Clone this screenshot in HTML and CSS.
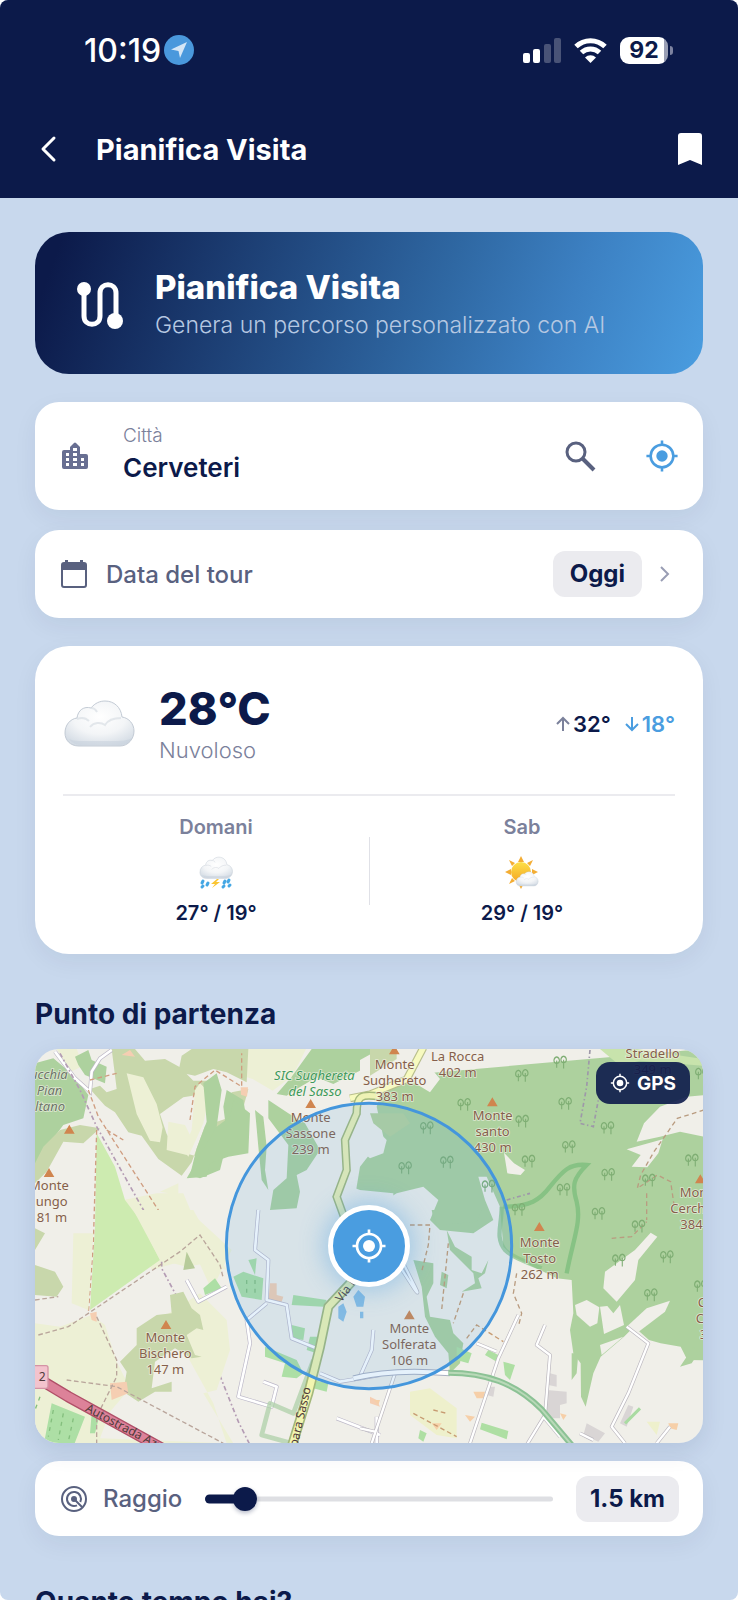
FILE: index.html
```html
<!DOCTYPE html>
<html lang="it">
<head>
  <meta charset="UTF-8" />
  <meta name="viewport" content="width=device-width, initial-scale=1.0" />
  <title>Pianifica Visita</title>
  <link rel="stylesheet" href="styles.css">
</head>
<body>
  <!-- Shared icons -->
  <svg class="sprite" aria-hidden="true">
    <symbol id="i-gps" viewBox="0 0 24 24">
      <circle cx="12" cy="12" r="4" fill="currentColor"/>
      <circle cx="12" cy="12" r="8" fill="none" stroke="currentColor" stroke-width="1.8"/>
      <path d="M12 1v3M12 20v3M1 12h3M20 12h3" stroke="currentColor" stroke-width="1.8"/>
    </symbol>
    <symbol id="i-cloud" viewBox="0 0 72 50">
      <path d="M16 47C7 47 2 41 2 34c0-8 5-14 12-15C15 11 21 7 28 9 32 4 37 2 42 2c9 0 16 6 17 16 7 1 12 7 12 14 0 8-6 15-14 15z" fill="url(#cloudFill)" stroke="#c3cbd5" stroke-width="1"/>
      <path d="M28 9c3 0 5 2 6 4M14 20c5-2 9-1 12 2M27 28c4-5 11-5 15-2 3-5 10-7 16-7" fill="none" stroke="#d9dee4" stroke-width="2" opacity=".7"/>
      <path d="M6 40c4 5 9 6 14 6h36c6 0 10-2 13-7-5 3-12 3-18 3H20c-6 0-10 0-14-2z" fill="#c6d0db" opacity=".5"/>
    </symbol>
    <symbol id="tree" viewBox="0 0 42 38">
      <path d="M11 4c-10 3-10 18 0 18s10-15 0-18zM11 14v20M30 2c-10 3-10 18 0 18s10-15 0-18zM30 12v24" fill="none" stroke="#7fae74" stroke-width="3"/>
    </symbol>
    <defs>
      <radialGradient id="cloudFill" cx=".5" cy=".35" r=".7">
        <stop offset="0" stop-color="#ffffff"/>
        <stop offset=".55" stop-color="#f3f5f7"/>
        <stop offset="1" stop-color="#d3dbe4"/>
      </radialGradient>
      <linearGradient id="sunFill" x1="0" y1="0" x2="0" y2="1">
        <stop offset="0" stop-color="#fde047"/>
        <stop offset="1" stop-color="#f5a623"/>
      </linearGradient>
    </defs>
  </svg>

  <div class="app">
    <header class="header">
      <div class="status">
        <div class="status-time">
          <span>10:19</span>
          <svg width="32" height="32" viewBox="0 0 32 32"><circle cx="16" cy="16" r="15" fill="#4a98dc"/><path d="M24 8 8 15.500l7.500 1.500L17 24z" fill="#d5e6f6"/></svg>
        </div>
        <div class="status-icons">
          <svg width="38" height="25" viewBox="0 0 38 25" fill="#fff">
            <rect x="0" y="15" width="7" height="10" rx="2"/>
            <rect x="10" y="11" width="7" height="14" rx="2"/>
            <rect x="21" y="6" width="7" height="19" rx="2" opacity=".25"/>
            <rect x="31" y="0" width="7" height="25" rx="2" opacity=".25"/>
          </svg>
          <svg width="33" height="25" viewBox="0 0 33 25" fill="none" stroke="#fff" stroke-width="5">
            <path d="M2 8.500a21 21 0 0 1 29 0"/>
            <path d="M7.500 14.500a13 13 0 0 1 18 0"/>
            <path d="M16.500 25l-5.500-5.500a8 8 0 0 1 11 0z" fill="#fff" stroke="none"/>
          </svg>
          <div class="battery">92</div>
        </div>
      </div>
      <div class="nav">
        <button class="icon-btn" aria-label="Indietro">
          <svg width="24" height="28" viewBox="0 0 24 28" fill="none" stroke="currentColor" stroke-width="3" stroke-linecap="round" stroke-linejoin="round"><path d="M19 3 8 14l11 11"/></svg>
        </button>
        <h1>Pianifica Visita</h1>
        <button class="icon-btn" aria-label="Salva">
          <svg width="26" height="32" viewBox="0 0 26 32" fill="currentColor"><path d="M4 0h18q3 0 3 3v29l-12-5-12 5V3q0-3 3-3z"/></svg>
        </button>
      </div>
    </header>

    <main class="content">
      <section class="hero">
        <svg width="48" height="48" viewBox="0 0 48 48" fill="none" stroke="#fff" stroke-width="5">
          <path d="M8 8v27c0 11 16 11 16 0V12c0-11 16-11 16 0v27"/>
          <circle cx="8" cy="8" r="7" fill="#fff" stroke="none"/>
          <circle cx="39" cy="40" r="8" fill="#fff" stroke="none"/>
        </svg>
        <div>
          <h2>Pianifica Visita</h2>
          <p>Genera un percorso personalizzato con AI</p>
        </div>
      </section>

      <section class="card city">
        <svg width="28" height="28" viewBox="0 0 28 28" fill="#686f92" fill-rule="evenodd"><path d="M3 8h6V5l4-4q1-1 2 0l4 4v7h6q2 0 2 2v11q0 2-2 2H3q-2 0-2-2V10q0-2 2-2zM5 11v3h3v-3zM5 16v3h3v-3zM5 21v3h3v-3zM12 6v3h4V6zM12 11v3h4v-3zM12 16v3h4v-3zM12 21v3h4v-3zM20 16v3h3v-3zM20 21v3h3v-3z"/></svg>
        <div class="field">
          <label for="city">Città</label>
          <input id="city" type="text" value="Cerveteri">
        </div>
        <button class="icon-btn muted" aria-label="Cerca">
          <svg width="32" height="32" viewBox="0 0 32 32" fill="none" stroke="currentColor" stroke-width="3"><circle cx="12" cy="12" r="9"/><path d="M18 18l12 12" stroke-width="4"/></svg>
        </button>
        <button class="icon-btn accent" aria-label="Usa posizione">
          <svg width="34" height="34"><use href="#i-gps"/></svg>
        </button>
      </section>

      <section class="card date">
        <svg width="26" height="30" viewBox="0 0 26 30"><path d="M3 4h20q2 0 2 2v20q0 2-2 2H3q-2 0-2-2V6q0-2 2-2z" fill="none" stroke="#59617f" stroke-width="2"/><path d="M1 4h24v7H1zM4 1h3v4H4zM19 1h3v4h-3z" fill="#59617f"/></svg>
        <span class="row-label">Data del tour</span>
        <button class="pill">Oggi</button>
        <svg width="12" height="18" viewBox="0 0 12 18" fill="none" stroke="#999db4" stroke-width="2"><path d="M2 2l7 7-7 7"/></svg>
      </section>

      <section class="card weather">
        <div class="today">
          <svg width="72" height="50"><use href="#i-cloud"/></svg>
          <div class="now">
            <strong>28°C</strong>
            <span>Nuvoloso</span>
          </div>
          <div class="range-temp">
            <span><svg width="14" height="16" viewBox="0 0 14 16" fill="none" stroke="#7b819b" stroke-width="2"><path d="M7 15V2M1 8l6-6 6 6"/></svg>32°</span>
            <span class="low"><svg width="14" height="16" viewBox="0 0 14 16" fill="none" stroke="currentColor" stroke-width="2"><path d="M7 1v13M1 8l6 6 6-6"/></svg>18°</span>
          </div>
        </div>
        <div class="forecast">
          <div class="day">
            <span class="day-name">Domani</span>
            <svg width="36" height="36" viewBox="0 0 36 36">
              <use href="#i-cloud" x="1" y="1" width="34" height="24"/>
              <path d="M19 24l-6 5h4l-3 4 8-6h-4l3-3z" fill="#fbc531"/>
              <path d="M5 26l-1 2M10 28l-1 2M27 26l-1 2M31 25l-1 2M26 31l-1 1M5 31l-1 1M32 30l-1 1" stroke="#45a7e4" stroke-width="3" stroke-linecap="round"/>
            </svg>
            <span class="day-temp">27° / 19°</span>
          </div>
          <div class="day">
            <span class="day-name">Sab</span>
            <svg width="36" height="36" viewBox="0 0 36 36">
              <path d="M17 1l3 6h-6zM17 34l3-6h-6zM1 17l6-3v6zM34 17l-6-3v6zM5 5l6 3-3 3zM29 5l-6 3 3 3zM5 29l6-3-3-3z" fill="#f4ad33"/>
              <circle cx="17" cy="17" r="10" fill="url(#sunFill)"/>
              <use href="#i-cloud" x="11" y="16" width="24" height="16"/>
            </svg>
            <span class="day-temp">29° / 19°</span>
          </div>
        </div>
      </section>

      <h3>Punto di partenza</h3>
      <section class="map">
        <svg class="map-art" viewBox="0 0 2004 1182" preserveAspectRatio="xMidYMid slice">
          <rect width="2004" height="1182" fill="#f0efe9"/>

          <!-- North west -->
          <g transform="translate(-105 -207)">
            <path d="M728 207h190l-40 80-60 45-60-35-32-10zM170 207h60l20 50-40 20z" fill="#edf0d5"/>
            <path d="M105 250l55-15 60 50 45 60-15 70-60 20-60 80-25 60z" fill="#add19e"/>
            <path d="M225 230l40-20 10 30 45 20-5 50-60-25-20-30z" fill="#add19e"/>
            <path d="M130 500l50-50 60-15 60 10-50 45-60-5-50 90-35 35v-60z" fill="#c8d7ab"/>
            <path d="M335 207h70l30 35 60-5 45 25 40 40 50 0-20 40-60 10-70 50 20 60 30 50 70 20 60 0 15-60 40-35 30-110-50 10-20 80-60 20-40 110-30 40-70-50-50-70-40-10-40-60-30-20-45-50 30-10 20 20 30-10z" fill="#c8d7ab"/>
            <path d="M575 207h170l-5 100-60-30-40-10-55 20-50-10 10-50z" fill="#c8d7ab"/>
            <path d="M380 280l50 12 40 80 18 70-8 45-30-5-40-80zM505 425l50 10 25 50-20 40-60-15zM600 310l30 30-20 90-45 100-15-20 25-60 10-120z" fill="#edf0d5"/>
            <path d="M610 310l40-30 15 50-15 110 30 20-10-80 10-50 50 30 10 60-35 20-30 70-15 60-60 25-30-10 20-80 30-80z" fill="#add19e"/>
            <path d="M650 440l40-30 10-50 50 40-5 120-60 10-55 20-10 40-60 5z" fill="#add19e"/>
            <path d="M875 290l60-83h205v35l-80 40-60 30-50-20-60 35-30 20-30-5zM765 390l25 20 10 90-5 70 10 60-20-30-10-100zM805 360l60 40 50 30 45 80-40 60-30 15 10 50-10 50-80 5 10-60 40-35 5-100-60-80z" fill="#add19e"/>
            <path d="M1080 207h60v150l-60-20z" fill="#add19e"/>
            <path d="M480 635l55-25v35zM370 660l100-20 80 0 25 60 120 110-60 120-50-110-60 30-70 20z" fill="#edf0d5"/>
            <path d="M290 460l55 100 30 100 45 60 60 120-210 150 15-250z" fill="#cdebb0"/>
            <path d="M365 225l25-15 15 20zM722 322h22l-3 28-18-6z" fill="#f5ceb2"/>
            <path d="M165 215l60 80 45 40 5-60 25-40 35-25" fill="none" stroke="#bdb8c6" stroke-width="12"/>
            <path d="M165 215l60 80 45 40 5-60 25-40 35-25" fill="none" stroke="#fff" stroke-width="8"/>
            <path d="M180 220l60 110 50 110 160 285 35 90 0 50 70 130 100 180 60 150 40 80" fill="none" stroke="#b49cb4" stroke-width="5" stroke-dasharray="14 8 5 8"/>
            <path d="M270 300l80-20M265 330l30 80 180 280 60 140M320 450l50 30M570 420l15-100 60-50 80 50 0-100M290 450l-10 340-15 210" fill="none" stroke="#cf9d80" stroke-width="4" stroke-dasharray="14 9"/>
          </g>

          <!-- South west -->
          <g transform="translate(-105 483)">
            <path d="M105 340l75 10 95-35 40 30 35 110 40 80-60 70-30 80 380 15-40-120-110-200-70-40 140-90 80 80 10 90-40 120-40 10 90 150-60 40H105zM220 70h60l-15 230-50-20z" fill="#edf0d5"/>
            <path d="M400 0h180l50 90 50 90-60-20-60 10-80-20z" fill="#edf0d5"/>
            <path d="M105 165l60 20 25 45-20 30-65-5zM105 55l30 15-30 50zM510 255l40-10 25 50 25 20 10 45-20-5-30 20 25 60 20 5-30 5-50-30-60 40-10 80 60-20 0 30-50 0-50 30-45-30 10-60-20-30 50-50 0-50 60-40 45-5z" fill="#c8d7ab"/>
            <path d="M560 125l25 50-35 5z" fill="#b7cb9a"/>
            <path d="M155 580l100 40-35 90H130zM275 610l20 20-10 40h-15zM610 235l35-30 20 30-50 20zM700 200l30-15 60 20-5 65-60-10zM745 150l25-5-5 50zM880 255l100 15-10 20-95-5zM875 345l40 10-5 35-35-5zM930 380l30 0-10 50-30-10zM795 410l95 40 20 40-20 15-45-5 10-40-60-20zM940 510l45 10-5 25-40-10z" fill="#addfa5"/>
            <path d="M120 560l-15 40M160 600l-15 80M190 610l-15 80M220 625l-15 70M740 210v40M765 210v50" stroke="#84bf7e" stroke-width="4" stroke-dasharray="12 14"/>
            <path d="M330 520l50-5 5 35-50 20zM270 310l20-5 0 30-15-5zM810 220l20 0 0 35 20 5-5 15-40 0zM1110 560l20 10 10 20-30-10z" fill="#f5ceb2"/>
            <path d="M115 375l90-25 60-40 275-185 60-50 60 90 10 40M290 320l60 130 0 50-60 120 0 80M200 510l150 20 320 170M105 270l70-10" fill="none" stroke="#b9a59b" stroke-width="4" stroke-dasharray="14 8"/>
            <g fill="none" stroke-linejoin="round">
              <path d="M560 210l35 65 85-45M775 0l-10 120 40 30-5 120 60 15 15 100 75 30M800 280l-60 50 10 70-35 160 100 30 15-60-40-15M1010 625l130 50M1120 360l-5 60-40 90M960 490l60 25 120-20M1130 620v80" stroke="#bcb8c8" stroke-width="12"/>
              <path d="M560 210l35 65 85-45M775 0l-10 120 40 30-5 120 60 15 15 100 75 30M800 280l-60 50 10 70-35 160 100 30 15-60-40-15M1010 625l130 50M1120 360l-5 60-40 90M960 490l60 25 120-20M1130 620v80" stroke="#fff" stroke-width="8"/>
              <path d="M940 450l-60 160-70-30-25 95 90 25" stroke="#a9cfa4" stroke-width="14" opacity=".7"/>
              <path d="M1060 210l-75 80-25 120-35 140-50 160" stroke="#a4b87b" stroke-width="30"/>
              <path d="M1060 210l-75 80-25 120-35 140-50 160" stroke="#f2f5b0" stroke-width="20"/>
              <path d="M105 500l100 60 100 55 190 105" stroke="#b04f68" stroke-width="34"/>
              <path d="M105 500l100 60 100 55 190 105" stroke="#dc8299" stroke-width="26"/>
            </g>
            <path d="M1015 290l15-10 10 25-10 30-15-10zM1060 260l15-20 20 20-5 30-20 0zM1080 305h10v20h-10z" fill="#8cbfe4"/>
            <rect x="90" y="467" width="54" height="68" rx="6" fill="#f3c3cd" stroke="#d493a5" stroke-width="4"/>
            <text x="116" y="514" class="road">2</text>
            <text x="0" y="0" transform="translate(254 602) rotate(28)" class="road">Autostrada Azz</text>
            <text x="0" y="0" transform="translate(892 712) rotate(-77)" class="road">para Sasso</text>
            <text x="0" y="0" transform="translate(1024 278) rotate(-53)" class="road">Via F</text>
          </g>

          <!-- East -->
          <g transform="translate(975 -207)">
            <path d="M1032 207v934l-50-1-20-40-60-10-35-10-45-40-30 30-70 60-22 50-23 100-14-30-1-100-22-30-10-70 10-50-5-100-45-5-70-35-60-30-30-30-10-120-40-90-25 0 20 70 25 60-60 40-100-10-30-30 25-60-45-40-80 20-65 40-30-10-30-20 15-90 70-90-20-90 30-90z" fill="#add19e"/>
            <path d="M0 240l60-33h90l40 30 50 60-30 40-50-30-90 20-70 30zM-80 600l80 30 100 10 0 60-80 60-100-20z" fill="#f0efe9"/>
            <path d="M-20 460l40-30 40 30 20 20-10 40-40 15-50-40z" fill="#f0efe9"/>
            <path d="M30 400l100 0 20 30-60 40-50-40z" fill="#b6d29c"/>
            <path d="M30 207h80v30l-80 50z" fill="#c8d7ab"/>
            <path d="M720 207h110l200 30v20l-190-15-60 15z" fill="#c8e3ac"/>
            <path d="M430 680c80 0 110-20 140-60 40-50 60-70 110-65-40 40-45 60-30 110 15 60-10 110-30 215" fill="none" stroke="#87c284" stroke-width="13"/>
            <path d="M425 680c0 60-20 90 10 130 20 20 60 35 110 55" fill="none" stroke="#87c284" stroke-width="13" opacity=".7"/>
            <path d="M690 210l-10 110-20 110 40 10 15-80M440 660l70-20" fill="none" stroke="#9e98a9" stroke-width="5" stroke-dasharray="12 8 4 8"/>
            <path d="M-30 355l60-12 110-45 50-95" fill="none" stroke="#b9bf8d" stroke-width="24"/>
            <path d="M-30 355l60-12 110-45 50-95" fill="none" stroke="#f7fabf" stroke-width="17"/>
            <path d="M60 350c-60-10-70 0-70 50l-35 80 5 90-30 80 40 110" fill="none" stroke="#a4b87b" stroke-width="25"/>
            <path d="M60 350c-60-10-70 0-70 50l-35 80 5 90-30 80 40 110" fill="none" stroke="#eef2b4" stroke-width="16"/>
          </g>
          <g transform="translate(975 483)">
            <path d="M635 430l20 0-5 60-15 20zM960 470l40-60 15 20-20 30zM160 150l60 10 0 60-20 40 10 60 60 10 10 40 30 30-10 60-30 30-5-60-40-50-30-60-10-90zM215 0h150l-15 35-110 10-20-20zM245 185l20 10-5 40-20-10zM260 60l25 50 50 30 0 40 30 10 20-40-10 40-20 15 10 30-60 10 40-25-5-30-70-70z" fill="#add19e"/>
            <path d="M290 410l45 20-10 30-35-10zM385 420l30 15-5 20-35-20zM430 455l35 10-15 45-15-15zM365 638l80 25-5 25-80-30zM180 660l20 10-10 25-15-10z" fill="#aedfa3"/>
            <path d="M150 545l60-10 80 60 0 90-60-10-80-60zM860 635l40 0-10 40z" fill="#eef0cc"/>
            <path d="M570 490l20 5 0 35-25-5zM560 540l60 5 0 35-20 5 0 40-45 0zM805 585l15 5-20 60-20-10zM680 640l55 30-20 25-45-20zM385 530l20 0-5 30-20-5z" fill="#d9d5d5"/>
            <path d="M340 545l35 0-5 20-20 0zM315 615l30 5-15 15zM600 610l20 5-10 15zM925 640l30 0-5 20-20-5zM215 640l30 0-15 20zM40 570l20 0-5 15z" fill="#f6cfa8"/>
            <path d="M160 610l130 70M220 600l40 10M320 385l30-40 80 50M150 45h60l-5 60-20 80M265 100l-20 200M310 250l-30 90" fill="none" stroke="#c79b72" stroke-width="4" stroke-dasharray="14 9"/>
          </g>

          <!-- Clearings in the woods -->
          <g transform="translate(975 -207)" fill="#f0efe9">
            <polygon points="1040,345 980,350 900,380 852,430 830,485 900,470 960,455 1040,472"/>
            <polygon points="800,508 908,478 895,520 862,562 815,560 842,525"/>
            <polygon points="432,518 462,550 495,570 482,585 442,580"/>
            <polygon points="735,875 825,810 872,758 892,770 835,840 825,900 770,965 730,925"/>
            <polygon points="645,975 680,960 718,982 712,1030 690,1040 650,1005"/>
            <polygon points="720,980 742,978 760,1000 780,975 792,1035 732,1062"/>
            <polygon points="800,1040 860,985 930,962 915,995 830,1060"/>
            <polygon points="720,1095 790,1070 725,1125"/>
          </g>
          <path transform="translate(975 -207)" d="M1032 390l-80 25-70 100-40 70-10 40 60-40 40 20 10 70M860 640v80M470 880l-10 60 25 60-10 40M755 775l60-5 45-45" fill="none" stroke="#b99c80" stroke-width="4" stroke-dasharray="14 10"/>
          <g transform="translate(975 483)" fill="none" stroke-linejoin="round">
            <path d="M475 315l-60 130-85 255M105 490L35 700M555 345l-25 60 40 30-15 180-55 90M550 620l50 60M800 350l65 50-60 150-50 100 40 50M930 650l-40 50M350 400l60 25M0 655l45 10M120 170l45 70q15 20 0-10l-40-80M660 670l40 20" stroke="#bcb8bf" stroke-width="11"/>
            <path d="M475 315l-60 130-85 255M105 490L35 700M555 345l-25 60 40 30-15 180-55 90M550 620l50 60M800 350l65 50-60 150-50 100 40 50M930 650l-40 50M350 400l60 25M0 655l45 10M120 170l45 70q15 20 0-10l-40-80M660 670l40 20" stroke="#fff" stroke-width="7"/>
            <path d="M-20 505q120-30 290-15" stroke="#aab0c2" stroke-width="18"/>
            <path d="M-20 505q120-30 290-15" stroke="#fff" stroke-width="12"/>
            <path d="M265 488c110 0 200 30 280 110l90 107" stroke="#8cc295" stroke-width="18"/>
            <path d="M265 488c110 0 200 30 280 110l90 107" stroke="#b9d9b8" stroke-width="6"/>
            <path d="M840 595l-45 45" stroke="#a9dba2" stroke-width="9"/>
          </g>

          <g transform="translate(975 -207)">
            <use href="#tree" x="578" y="226" width="46" height="42"/>
            <use href="#tree" x="463" y="266" width="46" height="42"/>
            <use href="#tree" x="290" y="353" width="46" height="42"/>
            <use href="#tree" x="593" y="350" width="46" height="42"/>
            <use href="#tree" x="464" y="403" width="46" height="42"/>
            <use href="#tree" x="720" y="423" width="46" height="42"/>
            <use href="#tree" x="178" y="423" width="46" height="42"/>
            <use href="#tree" x="604" y="480" width="46" height="42"/>
            <use href="#tree" x="483" y="523" width="46" height="42"/>
            <use href="#tree" x="238" y="526" width="46" height="42"/>
            <use href="#tree" x="113" y="543" width="46" height="42"/>
            <use href="#tree" x="722" y="563" width="46" height="42"/>
            <use href="#tree" x="973" y="520" width="46" height="42"/>
            <use href="#tree" x="844" y="580" width="46" height="42"/>
            <use href="#tree" x="363" y="598" width="46" height="42"/>
            <use href="#tree" x="588" y="608" width="46" height="42"/>
            <use href="#tree" x="693" y="680" width="46" height="42"/>
            <use href="#tree" x="453" y="668" width="46" height="42"/>
            <use href="#tree" x="813" y="718" width="46" height="42"/>
            <use href="#tree" x="898" y="810" width="46" height="42"/>
            <use href="#tree" x="754" y="820" width="46" height="42"/>
            <use href="#tree" x="850" y="924" width="46" height="42"/>
            <use href="#tree" x="1000" y="898" width="46" height="42"/>
            <use href="#tree" x="1003" y="260" width="46" height="42"/>
          </g>

          <!-- Peaks and names -->
          <path class="peaks" d="M103 227l-16 27h32zM42 357l-16 27h32zM827 150l-16 27h32zM1078-11l-16 27h32zM1372 145l-16 27h32zM1513 519l-16 27h32zM1123 784l-16 27h32zM393 813l-16 27h32zM1996 376l-16 27h32z"/>
          <g class="labels">
            <text><tspan x="98" y="91" class="grey">ucchia</tspan><tspan x="82" y="138" class="grey">Pian</tspan><tspan x="90" y="186" class="grey">ltano</tspan></text>
            <text class="start"><tspan x="-18" y="424">Monte</tspan><tspan x="2" y="472">ungo</tspan><tspan x="5" y="520">81 m</tspan></text>
            <text class="park"><tspan x="838" y="93">SIC Sughereta</tspan><tspan x="840" y="140">del Sasso</tspan></text>
            <text><tspan x="827" y="220">Monte</tspan><tspan x="827" y="268">Sassone</tspan><tspan x="827" y="316">239 m</tspan></text>
            <text><tspan x="1079" y="59">Monte</tspan><tspan x="1079" y="107">Sughereto</tspan><tspan x="1079" y="155">383 m</tspan></text>
            <text><tspan x="1268" y="37">La Rocca</tspan><tspan x="1268" y="85">402 m</tspan></text>
            <text><tspan x="1373" y="213">Monte</tspan><tspan x="1373" y="261">santo</tspan><tspan x="1373" y="309">430 m</tspan></text>
            <text><tspan x="1853" y="27">Stradello</tspan><tspan x="1853" y="75">349 m</tspan></text>
            <text class="start"><tspan x="1934" y="443">Monte</tspan><tspan x="1906" y="491">Cerchio</tspan><tspan x="1936" y="539">384 m</tspan></text>
            <text><tspan x="1514" y="593">Monte</tspan><tspan x="1514" y="641">Tosto</tspan><tspan x="1514" y="689">262 m</tspan></text>
            <text><tspan x="1123" y="853">Monte</tspan><tspan x="1123" y="901">Solferata</tspan><tspan x="1123" y="949">106 m</tspan></text>
            <text><tspan x="391" y="878">Monte</tspan><tspan x="391" y="926">Bischero</tspan><tspan x="391" y="974">147 m</tspan></text>
            <text class="start"><tspan x="1988" y="775">C</tspan><tspan x="1982" y="823">C</tspan><tspan x="1994" y="871">3</tspan></text>
          </g>

          <!-- Search radius -->
          <circle cx="1002" cy="591" r="428" fill="#4a9de0" fill-opacity=".14" stroke="#4496dc" stroke-width="9"/>
        </svg>
        <div class="marker"><svg width="36" height="36"><use href="#i-gps"/></svg></div>
        <button class="gps"><svg width="20" height="20"><use href="#i-gps"/></svg>GPS</button>
      </section>

      <section class="card radius">
        <svg width="26" height="26" viewBox="0 0 26 26" fill="none" stroke="#59617f" stroke-width="2"><circle cx="13" cy="13" r="12"/><path d="M16 19.300a7 7 0 1 1 3.300-3.300M13 13l8 8"/><circle cx="13" cy="13" r="2" fill="#59617f"/></svg>
        <label class="row-label" for="radius">Raggio</label>
        <div class="slider">
          <input id="radius" type="range" min="0.5" max="10" step="0.5" value="1.5">
        </div>
        <output class="pill" for="radius">1.5 km</output>
      </section>

      <h3>Quanto tempo hai?</h3>
    </main>
  </div>
</body>
</html>
```
FILE: styles.css
```css
* {
  box-sizing: border-box;
}
body, html {
  margin: 0;
  padding: 0;
  height: 100%;
  background: #fff;
  color: #0c1a4a;
  font-family: Inter, "Open Sans", sans-serif;
}
h1, h2, h3, p {
  margin: 0;
}
svg {
  display: block;
  flex: none;
}
button, input {
  font-family: inherit;
  color: inherit;
}
.sprite {
  position: absolute;
  width: 0;
  height: 0;
}
.app {
  display: flex;
  flex-direction: column;
  height: 100vh;
  overflow: hidden;
  border-radius: 8px;
  background: #c8d8ed;
}

/* Header */
.header {
  flex: none;
  background: #0c1a4a;
  color: #fff;
}
.status {
  display: flex;
  align-items: center;
  justify-content: space-between;
  height: 100px;
  padding: 0 64px 0 84px;
}
.status-time {
  display: flex;
  align-items: center;
  gap: 2px;
  font-size: 32px;
  font-weight: 500;
}
.status-icons {
  display: flex;
  align-items: center;
  gap: 13px;
}
.battery {
  position: relative;
  width: 48px;
  height: 27px;
  margin-right: 6px;
  border-radius: 9px;
  background: linear-gradient(90deg, #fff 44px, #9a9fb5 44px);
  color: #0c1a4a;
  font-size: 23px;
  font-weight: 700;
  line-height: 27px;
  text-align: center;
}
.battery::after {
  content: "";
  position: absolute;
  top: 9px;
  right: -5px;
  width: 3px;
  height: 9px;
  border-radius: 0 4px 4px 0;
  background: #7d83a0;
}
.nav {
  display: flex;
  align-items: center;
  height: 98px;
  padding: 0 35px;
}
.nav h1 {
  flex: 1;
  padding-left: 37px;
  font-size: 29px;
  font-weight: 700;
}
.icon-btn {
  padding: 0;
  border: none;
  background: none;
  cursor: pointer;
}
.icon-btn.muted {
  margin-right: 49px;
  color: #59617f;
}
.icon-btn.accent {
  color: #4a9de0;
}

/* Content */
.content {
  flex: 1;
  min-height: 0;
  padding: 34px 35px;
  overflow-y: auto;
  scrollbar-width: none;
}
.hero {
  display: flex;
  align-items: center;
  gap: 31px;
  height: 142px;
  padding: 4px 41px 0;
  border-radius: 34px;
  background: linear-gradient(110deg, #0c1a4a 4%, #2f68a3 60%, #3c80c2 78%, #4a9de0);
  color: #fff;
}
.hero h2 {
  font-size: 33px;
  font-weight: 800;
  line-height: 40px;
}
.hero p {
  color: #b6c8e2;
  font-size: 23px;
  font-weight: 300;
  line-height: 36px;
}
.card {
  display: flex;
  align-items: center;
  padding: 0 26px;
  border-radius: 24px;
  background: #fff;
  box-shadow: 0 8px 24px rgba(12, 26, 74, 0.06);
}
.city {
  height: 108px;
  margin-top: 28px;
  padding-right: 24px;
}
.field {
  flex: 1;
  min-width: 0;
  padding: 0 20px 4px 34px;
}
.field label {
  display: block;
  color: #7b819b;
  font-size: 19px;
  font-weight: 300;
  line-height: 28px;
}
.field input {
  display: block;
  width: 100%;
  padding: 0;
  border: none;
  outline: none;
  background: none;
  font-size: 26px;
  font-weight: 600;
  line-height: 36px;
}
.date {
  height: 88px;
  margin-top: 20px;
}
.row-label {
  color: #59617f;
  font-size: 24px;
  font-weight: 500;
}
.date .row-label {
  flex: 1;
  padding-left: 19px;
}
.pill {
  height: 46px;
  padding: 0 17px;
  border: none;
  border-radius: 12px;
  background: #ebebef;
  font-size: 24px;
  font-weight: 700;
  line-height: 46px;
  white-space: nowrap;
}
.date .pill {
  margin-right: 17px;
}
.date {
  padding-right: 32px;
}

/* Weather */
.weather {
  display: block;
  margin-top: 28px;
  padding: 28px 28px 27px;
  border-radius: 34px;
}
.today {
  display: flex;
  align-items: center;
  height: 122px;
  padding-bottom: 20px;
  border-bottom: 2px solid #ebebef;
}
.now {
  display: flex;
  flex: 1;
  flex-direction: column;
  padding-left: 24px;
}
.now strong {
  font-size: 45px;
  font-weight: 800;
  line-height: 52px;
}
.now span {
  color: #7b819b;
  font-size: 22px;
  font-weight: 300;
  line-height: 30px;
}
.range-temp {
  display: flex;
  gap: 14px;
  font-size: 22px;
  font-weight: 600;
}
.range-temp span {
  display: flex;
  align-items: center;
  gap: 3px;
}
.low {
  color: #4a9de0;
}
.forecast {
  display: flex;
  padding-top: 17px;
}
.day {
  position: relative;
  display: flex;
  flex: 1;
  flex-direction: column;
  align-items: center;
}
.day + .day::before {
  content: "";
  position: absolute;
  left: 0;
  top: 24px;
  width: 1px;
  height: 68px;
  background: #e0e1e7;
}
.day svg {
  margin: 14px 0 8px;
}
.day-name {
  color: #7b819b;
  font-size: 20px;
  font-weight: 600;
  line-height: 28px;
}
.day-temp {
  font-size: 20px;
  font-weight: 600;
  line-height: 28px;
}
h3 {
  margin-top: 42px;
  font-size: 28px;
  font-weight: 700;
  line-height: 36px;
}

/* Map */
.map {
  position: relative;
  height: 394px;
  margin-top: 17px;
  overflow: hidden;
  border-radius: 24px;
  box-shadow: 0 8px 24px rgba(12, 26, 74, 0.1);
}
.map-art {
  width: 100%;
  height: 100%;
}
.labels {
  fill: #855f4b;
  stroke: #f5f3ea;
  stroke-opacity: 0.7;
  stroke-width: 5px;
  paint-order: stroke;
  font: 39px "Noto Sans", sans-serif;
  text-anchor: middle;
}
.labels .start {
  text-anchor: start;
}
.labels .grey {
  fill: #6d7568;
  font-style: italic;
  text-anchor: end;
}
.labels .park {
  fill: #3d9a5b;
  font-style: italic;
}
.road {
  fill: #4f3a3a;
  font: 36px "Noto Sans", sans-serif;
}
.peaks {
  fill: #d0854f;
}
.marker {
  position: absolute;
  top: 50%;
  left: 50%;
  display: flex;
  align-items: center;
  justify-content: center;
  width: 82px;
  height: 82px;
  border: 5px solid #fff;
  border-radius: 50%;
  background: #4a9de0;
  color: #fff;
  transform: translate(-50%, -50%);
  box-shadow: 0 0 24px 4px rgba(74, 157, 224, 0.4);
}
.gps {
  position: absolute;
  top: 13px;
  right: 13px;
  display: flex;
  align-items: center;
  gap: 7px;
  height: 42px;
  padding: 0 14px;
  border: none;
  border-radius: 14px;
  background: rgba(12, 26, 74, 0.9);
  color: #fff;
  font-size: 19px;
  font-weight: 700;
}

/* Radius */
.radius {
  height: 75px;
  margin-top: 18px;
  padding-right: 24px;
}
.radius .row-label {
  padding-left: 16px;
}
.slider {
  position: relative;
  flex: 1;
  margin: 0 23px;
}
.slider::before,
.slider::after {
  content: "";
  position: absolute;
  top: 50%;
  left: 0;
  border-radius: 5px;
  transform: translateY(-50%);
}
.slider::before {
  width: 100%;
  height: 5px;
  background: #dedfe3;
}
.slider::after {
  width: 11%;
  height: 9px;
  background: #0c1a4a;
}
.slider input {
  position: relative;
  z-index: 1;
  display: block;
  width: calc(100% + 16px);
  height: 24px;
  margin: 0 -8px;
  background: none;
  appearance: none;
}
.slider input::-webkit-slider-thumb {
  width: 24px;
  height: 24px;
  border-radius: 50%;
  background: #0c1a4a;
  box-shadow: 0 2px 4px rgba(12, 26, 74, 0.3);
  appearance: none;
}
.radius .pill {
  padding: 0 14px;
}
.radius + h3 {
  margin-top: 48px;
}
```
